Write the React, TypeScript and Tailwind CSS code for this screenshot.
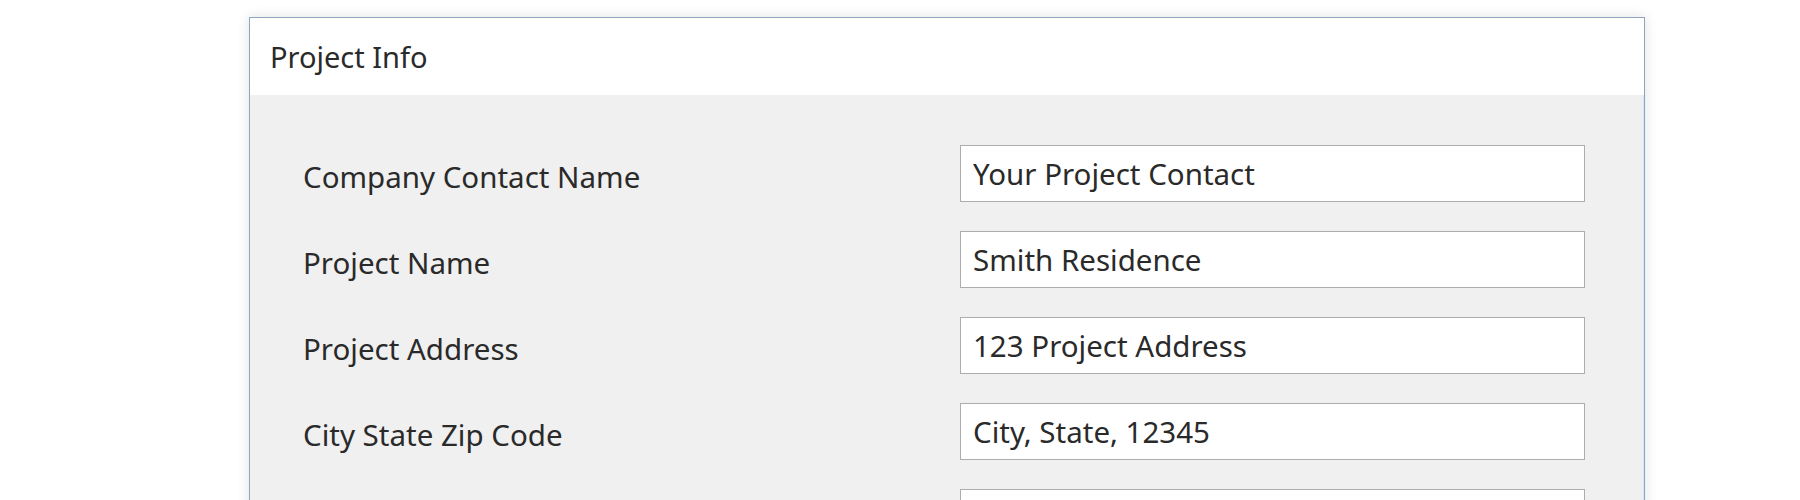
import React, { useState } from 'react';

const fields = [
  { label: 'Company Contact Name', value: 'Your Project Contact' },
  { label: 'Project Name', value: 'Smith Residence' },
  { label: 'Project Address', value: '123 Project Address' },
  { label: 'City State Zip Code', value: 'City, State, 12345' },
  { label: '', value: '' },
];

export default function App() {
  const [values, setValues] = useState(fields.map(f => f.value));

  return (
    <div className="w-[1800px] h-[500px] overflow-hidden bg-white pt-[17px] pl-[249px] font-['Noto_Sans',sans-serif] text-[#2a2a2a]">
      <div className="w-[1396px] h-[600px] border border-[#8ea5bd] shadow-[0_0_12px_rgba(0,0,0,0.12)] flex flex-col">
        {/* title bar */}
        <div className="h-[77px] bg-white flex items-center pl-[20px] text-[29px] shrink-0">
          Project Info
        </div>

        <div className="flex-1 bg-[#f0f0f0] border-r border-[#d3e6f7] pt-[50px] pl-[53px] pr-[58px] flex flex-col gap-[29px]">
          {fields.map((f, i) => (
            <div key={i} className="flex items-center">
              <label className="flex-1 text-[29.5px] pt-[7px] leading-none">{f.label}</label>
              <input
                value={values[i]}
                onChange={e => setValues(v => v.map((x, j) => (j === i ? e.target.value : x)))}
                className="w-[625px] h-[57px] bg-white border border-[#adadad] pl-[12px] text-[29.5px] text-[#2a2a2a] outline-none"
              />
            </div>
          ))}
        </div>
      </div>
    </div>
  );
}
